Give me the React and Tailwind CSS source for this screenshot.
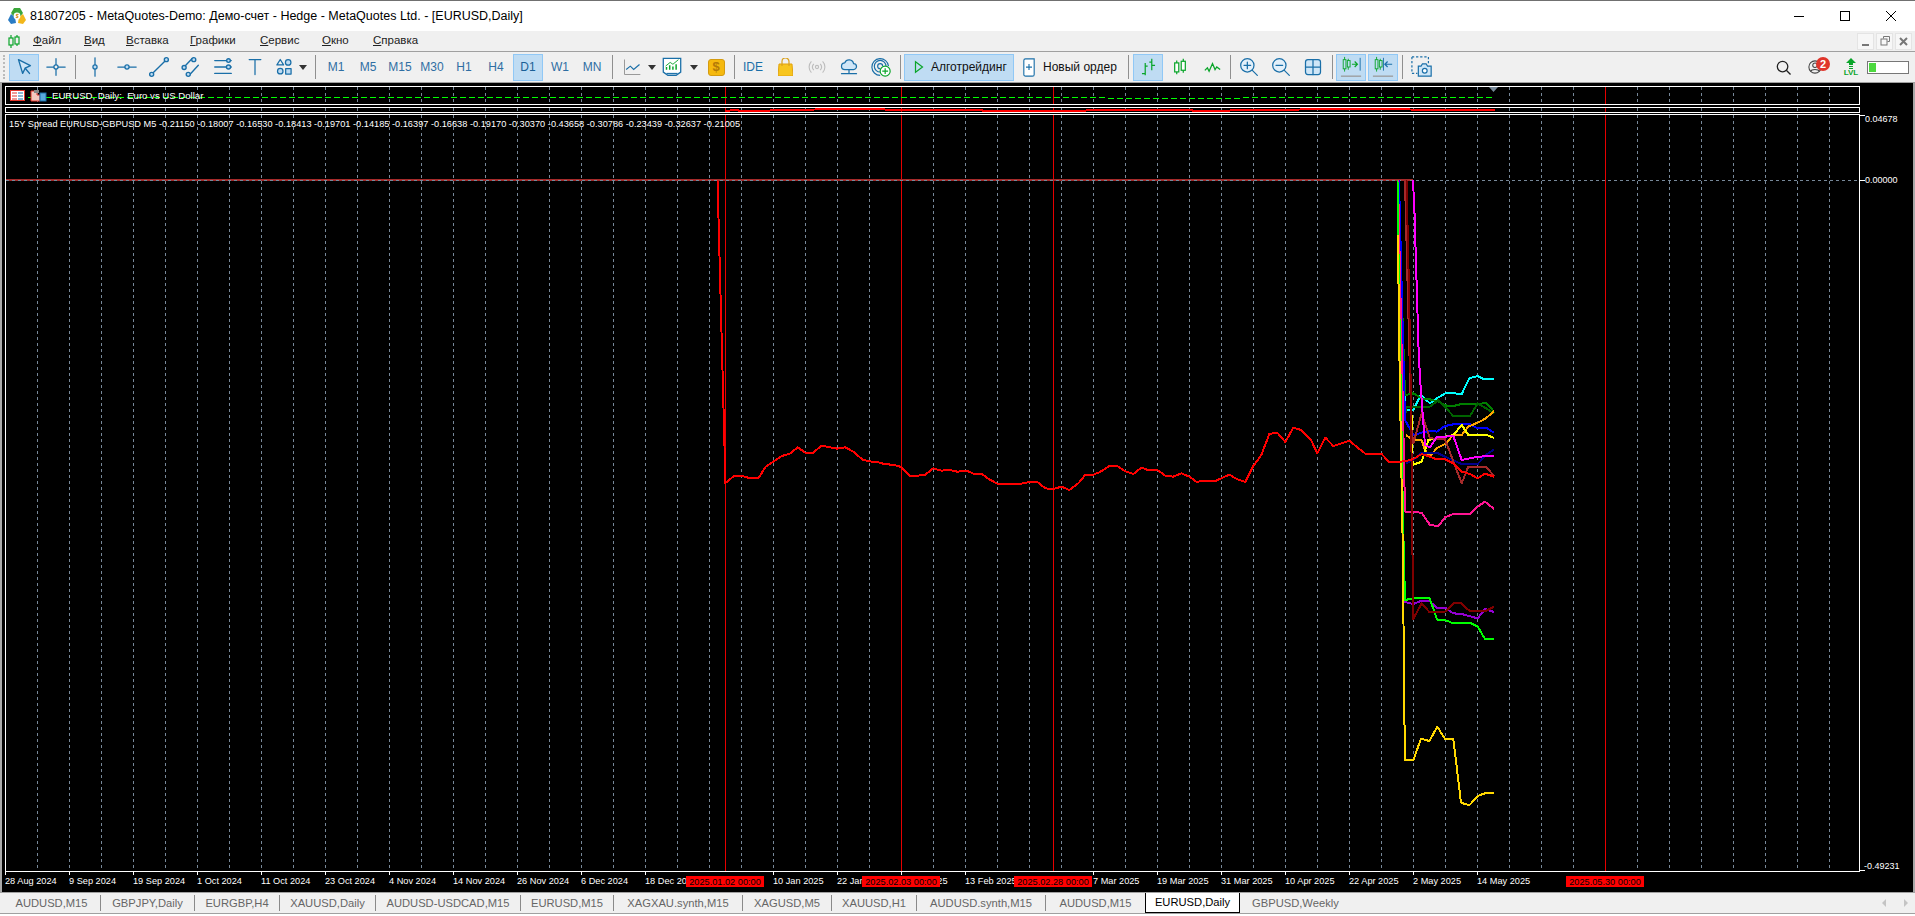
import React from 'react';

const GRID = Array.from({ length: 58 }, (_, i) => 5.5 + 32 * i);
const MARKS = [725.5, 901.5, 1053.5, 1605.5];

// points are read off zoomed crops, so they are kept as crop coords (3x) + crop origin
const z = (ox, oy, pts) => pts.map(([x, y]) => [ox + x / 3, oy + y / 3]);
const line = (...parts) => parts.flat().map(([x, y]) => `${x},${y}`).join(' ');

const RED = line(
  [[717.5, 180], [718.5, 218], [719.5, 256], [720.5, 294], [721.5, 332], [722.5, 370], [723.5, 408], [724.5, 446]],
  z(700, 160, [[75, 970], [103, 947], [125, 947], [150, 955], [175, 955], [197, 920], [245, 888], [268, 882], [293, 862], [316, 878], [340, 878], [364, 857], [412, 866], [436, 862], [460, 875], [488, 899], [508, 904], [532, 906], [556, 913], [580, 914], [604, 921], [628, 947], [652, 947], [676, 944], [700, 925], [724, 932], [748, 930], [772, 935], [800, 932], [820, 941], [844, 941], [868, 958], [892, 971], [964, 971], [988, 966], [1012, 966], [1036, 985], [1060, 987], [1084, 980], [1108, 990], [1135, 970], [1156, 944], [1180, 944], [1200, 936]]),
  z(1100, 400, [[0, 216], [28, 198], [52, 198], [76, 214], [100, 222], [124, 203], [144, 210], [172, 210], [196, 227], [220, 230], [244, 220], [268, 230], [290, 246], [312, 242], [348, 242], [388, 224], [412, 238], [436, 246], [460, 198], [484, 165], [508, 102], [532, 98], [556, 126], [580, 83], [604, 90], [632, 118], [652, 160], [676, 113], [700, 138], [748, 122], [772, 142], [796, 161], [844, 161], [868, 187], [892, 187], [918, 182]]),
  z(1380, 360, [[80, 303], [100, 297], [125, 282], [150, 290], [170, 298], [195, 298], [220, 310], [245, 335], [270, 342], [293, 355], [315, 341], [342, 350]]),
);

const c8 = (pts) => z(1380, 360, pts);
const c9 = (pts) => z(1380, 560, pts);

const SERIES = [
  { color: '#00ffff', pts: line([[1398, 180], [1405, 405]], c8([[80, 150], [100, 150], [122, 105], [150, 130], [175, 112], [200, 98], [245, 102], [268, 55], [293, 48], [310, 57], [342, 57]])) },
  { color: '#008000', pts: line([[1398, 180], [1405, 395]], c8([[78, 105], [100, 100], [125, 115], [150, 118], [175, 125], [200, 137], [225, 137], [245, 132], [270, 132], [320, 130], [342, 155]])) },
  { color: '#006400', pts: line(c8([[78, 160], [78, 140], [100, 140], [150, 140], [175, 120], [220, 168], [270, 168], [293, 130], [318, 145], [342, 160]])) },
  { color: '#0000ff', pts: line([[1399, 180], [1405, 420]], c8([[100, 225], [125, 218], [150, 212], [170, 215], [195, 198], [220, 193], [270, 193], [293, 205], [318, 203], [342, 218]])) },
  { color: '#ffa500', pts: line(c8([[78, 225], [100, 240], [125, 240], [135, 270], [150, 290], [170, 265], [195, 252], [220, 225], [245, 225], [265, 200], [293, 188], [318, 175], [342, 153]])) },
  { color: '#ffff00', pts: line(c8([[92, 55], [98, 315], [125, 305], [145, 240], [220, 225], [245, 195], [265, 225], [320, 225], [342, 234]])) },
  { color: '#00008b', pts: line(c8([[78, 310], [100, 300], [125, 278], [170, 278], [195, 290], [245, 312], [293, 312], [318, 285], [342, 268]])) },
  { color: '#ff1493', pts: line([[1398, 180], [1404, 460]], c8([[75, 455], [125, 458], [150, 495], [175, 498], [195, 472], [220, 462], [270, 462], [293, 440], [315, 425], [342, 447]])) },
  { color: '#9400d3', pts: line(c9([[72, 125], [100, 132], [125, 122], [147, 122], [170, 143], [195, 143], [220, 160], [245, 162], [293, 175], [315, 147], [342, 156]])) },
  { color: '#00ff00', pts: line([[1397.5, 180], [1399, 290], [1401, 400], [1403, 520], [1405, 600]], c9([[100, 115], [148, 113], [172, 180], [195, 180], [215, 188], [270, 188], [293, 200], [315, 237], [342, 237]])) },
  { color: '#ffd700', pts: line([[1398, 235], [1399, 330], [1401, 450], [1403, 560], [1404, 688], [1405, 760]], c9([[100, 600], [123, 536], [148, 543], [172, 500], [195, 537], [220, 537], [243, 728], [268, 736], [293, 708], [320, 698], [342, 698]])) },
  { color: '#a52a2a', pts: line([[1405, 180], [1408, 300], [1411.500, 430]], c8([[100, 250], [125, 160], [150, 235], [195, 238], [245, 370], [265, 320], [318, 320], [342, 348]])) },
  { color: '#800000', pts: line([[1406.500, 180], [1409, 290], [1411, 400], [1412.500, 555]], c9([[99, 178], [125, 130], [147, 155], [195, 155], [220, 130], [243, 130], [268, 152], [318, 152], [342, 140]])) },
  { color: '#ff00ff', pts: line([[1413, 180], [1414.5, 213], [1415.5, 247], [1416.5, 280], [1417.5, 313], [1418.5, 347], [1420, 378]], c8([[135, 255], [150, 262], [170, 232], [220, 228], [245, 300], [293, 290], [342, 288]])) },
];

const DATES = [
  [5, '28 Aug 2024'], [69, '9 Sep 2024'], [133, '19 Sep 2024'], [197, '1 Oct 2024'], [261, '11 Oct 2024'],
  [325, '23 Oct 2024'], [389, '4 Nov 2024'], [453, '14 Nov 2024'], [517, '26 Nov 2024'], [581, '6 Dec 2024'],
  [645, '18 Dec 2024'], [773, '10 Jan 2025'], [837, '22 Jan 2025'], [901, '3 Feb 2025'],
  [965, '13 Feb 2025'], [1093, '7 Mar 2025'], [1157, '19 Mar 2025'], [1221, '31 Mar 2025'],
  [1285, '10 Apr 2025'], [1349, '22 Apr 2025'], [1413, '2 May 2025'], [1477, '14 May 2025'],
];

const TAGS = [
  [686, '2025.01.02 00:00'], [862, '2025.02.03 00:00'], [1014, '2025.02.28 00:00'], [1566, '2025.05.30 00:00'],
];

const TABS = [
  ['AUDUSD,M15', 'w-[98px]', true], ['GBPJPY,Daily', 'w-[94px]', true], ['EURGBP,H4', 'w-[85px]', true],
  ['XAUUSD,Daily', 'w-[96px]', true], ['AUDUSD-USDCAD,M15', 'w-[145px]', true], ['EURUSD,M15', 'w-[93px]', true],
  ['XAGXAU.synth,M15', 'w-[129px]', true], ['XAGUSD,M5', 'w-[89px]', true], ['XAUUSD,H1', 'w-[85px]', true],
  ['AUDUSD.synth,M15', 'w-[129px]', true], ['AUDUSD,M15', 'w-[99px]', false],
];

const MENU = [
  ['Файл', 'w-[51px]'], ['Вид', 'w-[42px]'], ['Вставка', 'w-[64px]'], ['Графики', 'w-[70px]'],
  ['Сервис', 'w-[62px]'], ['Окно', 'w-[51px]'], ['Справка', 'w-[60px]'],
];
const BLUE = '#1a6fa8';
const GREEN = '#0aa52a';

function I({ children, size = 20 }) {
  return (
    <svg width={size} height={size} viewBox="0 0 24 24" fill="none" stroke={BLUE} strokeWidth="1.5" strokeLinecap="round" strokeLinejoin="round">
      {children}
    </svg>
  );
}

function Slot({ active, children, wide }) {
  return (
    <div className={`flex h-[27px] shrink-0 items-center justify-center ${wide || 'w-8'}`}>
      <div className={`flex h-[27px] w-[30px] items-center justify-center border ${active ? 'border-[#90c8f6] bg-[#bfdcf3]' : 'border-transparent'}`}>
        {children}
      </div>
    </div>
  );
}

function Sep({ w }) {
  return (
    <div className={`flex h-[27px] shrink-0 items-center justify-center ${w}`}>
      <div className="h-[24px] w-px bg-[#8f8f8f]" />
    </div>
  );
}

function Caret() {
  return <div className="h-0 w-0 border-x-[4px] border-t-[5px] border-x-transparent border-t-[#333]" />;
}

function Tf({ label, active }) {
  return (
    <Slot active={active}>
      <span className={`text-[12px] ${active ? 'text-[#1a5f96]' : 'text-[#2f6ea3]'}`}>{label}</span>
    </Slot>
  );
}

function Logo() {
  return (
    <svg width="18" height="18" viewBox="0 0 18 18">
      <path d="M6 1h6l3 5-3 4H6L3 6z" fill="#3aa63a" />
      <path d="M3 7l4 3 1 6-5 1-3-4z" fill="#2a7cc4" />
      <path d="M15 7l-4 3-1 6 5 1 3-4z" fill="#f2b71c" />
      <circle cx="9" cy="9" r="3.4" fill="#fff" />
      <path d="M10.5 7.4H8.3v1.6h1.5v1.6H7.7" stroke="#d88a14" strokeWidth="1" fill="none" />
    </svg>
  );
}

function TitleBar() {
  return (
    <div className="flex h-[30px] shrink-0 items-center bg-white pl-[8px] pr-px">
      <Logo />
      <span className="ml-[4px] text-[12.5px] text-black">81807205 - MetaQuotes-Demo: Демо-счет - Hedge - MetaQuotes Ltd. - [EURUSD,Daily]</span>
      <div className="ml-auto flex items-center">
        <div className="flex h-[30px] w-[46px] items-center justify-center">
          <div className="h-px w-[10px] bg-black" />
        </div>
        <div className="flex h-[30px] w-[46px] items-center justify-center">
          <div className="size-[10px] border border-black" />
        </div>
        <div className="flex h-[30px] w-[46px] items-center justify-center">
          <svg width="10" height="10" viewBox="0 0 10 10" stroke="#000" strokeWidth="1"><path d="M0 0l10 10M10 0L0 10" /></svg>
        </div>
      </div>
    </div>
  );
}

function MenuBar() {
  return (
    <div className="flex h-[20px] shrink-0 items-center bg-[#f0f0f0] pl-[8px] pr-[3px]">
      <svg width="12" height="13" viewBox="0 0 12 13" fill="none" stroke="#0aa52a" strokeWidth="1.2">
        <path d="M3 0v13M9 0v11" />
        <rect x="1" y="3" width="4" height="7" fill="#f0f0f0" />
        <rect x="7" y="2" width="4" height="7" fill="#f0f0f0" />
      </svg>
      <div className="ml-[13px] flex text-[11.5px] text-[#222]">
        {MENU.map(([m, w]) => (
          <span key={m} className={w}><span className="underline">{m[0]}</span>{m.slice(1)}</span>
        ))}
      </div>
      <div className="ml-auto flex gap-[2px]">
        <div className="flex size-[17px] items-end justify-center border border-[#e4e4e4] bg-[#f7f7f7] pb-[3px]">
          <div className="h-[2px] w-[7px] bg-[#777]" />
        </div>
        <div className="flex size-[17px] items-center justify-center border border-[#e4e4e4] bg-[#f7f7f7]">
          <svg width="10" height="10" viewBox="0 0 10 10" fill="none" stroke="#777"><path d="M3.5 2.5v-2h6v5h-2" /><rect x="1" y="3" width="6" height="6" /></svg>
        </div>
        <div className="flex size-[17px] items-center justify-center border border-[#e4e4e4] bg-[#f7f7f7]">
          <svg width="9" height="9" viewBox="0 0 9 9" stroke="#777" strokeWidth="2"><path d="M1 1l7 7M8 1L1 8" /></svg>
        </div>
      </div>
    </div>
  );
}

function Toolbar() {
  return (
    <div className="flex h-[32px] shrink-0 items-center border-y border-[#a0a0a0] bg-[#f0f0f0] text-[12px]">
      <div className="ml-[3px] h-[24px] w-[5px] border-l-2 border-dotted border-[#bbb]" />
      <Slot active>
        <I size={22}><path d="M6 4l4.500 15 2.800-5.700L19 10.500z" fill="#cfe6f7" /><path d="M13.300 13.300L18 19" /></I>
      </Slot>
      <Slot>
        <I><path d="M1 12h22M12 2v20" /><circle cx="12" cy="12" r="2.500" fill="#f0f0f0" /></I>
      </Slot>
      <Sep w="w-[7px]" />
      <Slot>
        <I><path d="M12 1v22" /><circle cx="12" cy="12" r="2.500" fill="#bfdcf3" /></I>
      </Slot>
      <Slot>
        <I><path d="M1 12h22" /><circle cx="12" cy="12" r="2.500" fill="#bfdcf3" /></I>
      </Slot>
      <Slot>
        <I size={22}><path d="M4 20L20 4" /><circle cx="4" cy="20" r="2.200" fill="#bfdcf3" /><circle cx="20" cy="4" r="2.200" fill="#bfdcf3" /></I>
      </Slot>
      <Slot>
        <I size={22}><path d="M4.500 12L13 3M10 21l10-11" /><circle cx="4.500" cy="12.500" r="2.200" fill="#bfdcf3" /><circle cx="15" cy="4" r="2.200" fill="#bfdcf3" /><circle cx="9" cy="20" r="2.200" fill="#bfdcf3" /></I>
      </Slot>
      <Slot>
        <I size={22}><path d="M3 5h18M3 12h18M3 19h18" /><circle cx="18" cy="12" r="2.200" fill="#bfdcf3" /><circle cx="18" cy="5" r="2" fill="#bfdcf3" /></I>
      </Slot>
      <Slot>
        <I><path d="M5 3h14M12 3v18" /></I>
      </Slot>
      <div className="flex h-[27px] w-[25px] shrink-0 items-center justify-center">
        <I><path d="M7.500 3l4 6.500h-8z" /><circle cx="17" cy="6.500" r="3.300" fill="#bfdcf3" /><circle cx="7.500" cy="17" r="3.300" fill="#bfdcf3" /><rect x="14" y="14" width="6.500" height="6.500" fill="#bfdcf3" /></I>
      </div>
      <div className="flex w-[14px] shrink-0 justify-center"><Caret /></div>
      <Sep w="w-[10px]" />
      {['M1', 'M5', 'M15', 'M30', 'H1', 'H4'].map((t) => <Tf key={t} label={t} />)}
      <Tf label="D1" active />
      <Tf label="W1" />
      <Tf label="MN" />
      <Sep w="w-[8px]" />
      <Slot>
        <svg width="20" height="20" viewBox="0 0 24 24" fill="none"><path d="M3 3v18h19" stroke="#999" strokeWidth="1.2" /><path d="M5 15l5-4 4 4 7-6" stroke={BLUE} strokeWidth="1.400" /></svg>
      </Slot>
      <div className="flex w-[8px] shrink-0 justify-center"><Caret /></div>
      <Slot>
        <svg width="22" height="22" viewBox="0 0 24 24" fill="none">
          <path d="M2.500 2.500h19v15l-5 3.500h-9l-5-3.500z" fill="#fff" stroke={BLUE} strokeWidth="1.400" />
          <path d="M6 15v-3M9.500 15v-5M13 15v-3.500M16.500 15v-6" stroke={GREEN} strokeWidth="1.600" />
          <path d="M5 11l5-4 3 2 6-5" stroke={GREEN} strokeWidth="1" />
          <path d="M6 19h12" stroke={BLUE} strokeWidth="1.200" />
        </svg>
      </Slot>
      <div className="flex w-[12px] shrink-0 justify-center"><Caret /></div>
      <Slot>
        <div className="flex size-[17px] items-center justify-center rounded-[3px] border border-[#d49b10] bg-[#f5b90f] text-[13px] font-bold text-[#b47a08]">$</div>
      </Slot>
      <Sep w="w-[5px]" />
      <Slot><span className="text-[12px] text-[#1a6fa8]">IDE</span></Slot>
      <Slot>
        <svg width="15" height="18" viewBox="0 0 15 18" fill="none">
          <path d="M1 6h13l1 12H0z" fill="#f7c51e" stroke="#e2a30f" />
          <path d="M4 8V3.500a3.500 3.500 0 017 0V8" stroke="#d9a01a" strokeWidth="1.200" />
        </svg>
      </Slot>
      <Slot>
        <svg width="18" height="16" viewBox="0 0 22 20" fill="none" stroke="#bdbdbd" strokeWidth="1.400">
          <path d="M4 3a10 10 0 000 14M18 3a10 10 0 010 14M7 6a6 6 0 000 8M15 6a6 6 0 010 8" />
          <circle cx="11" cy="10" r="2" />
        </svg>
      </Slot>
      <Slot>
        <I><path d="M7 15a4 4 0 010-8 5.500 5.500 0 0110.500 1 3.500 3.500 0 010 7z" fill="#cfe6f7" /><path d="M12 15v5M3 20h18" /></I>
      </Slot>
      <Slot>
        <svg width="20" height="20" viewBox="0 0 24 24" fill="none" stroke={BLUE} strokeWidth="1.400">
          <path d="M11 22A10 10 0 1121 11M11 18a7 7 0 117-7M11 14a3 3 0 113-3" />
          <circle cx="17" cy="17" r="6" fill="#fff" stroke={GREEN} />
          <path d="M17 13.500v7M13.500 17h7" stroke={GREEN} />
        </svg>
      </Slot>
      <Sep w="w-[7px]" />
      <div className="flex h-[27px] w-[110px] shrink-0 items-center border border-[#90c8f6] bg-[#bfdcf3] pl-[8px]">
        <svg width="12" height="14" viewBox="0 0 12 16" fill="none" stroke={GREEN} strokeWidth="1.400"><path d="M2 2l8 6-8 6z" /></svg>
        <span className="ml-[6px] text-[#111]">Алготрейдинг</span>
      </div>
      <div className="flex h-[27px] w-[110px] shrink-0 items-center pl-[8px]">
        <svg width="14" height="19" viewBox="0 0 14 22" fill="none" stroke={BLUE} strokeWidth="1.300">
          <path d="M1 3a2 2 0 012-2h10v18a2 2 0 01-2 2H3a2 2 0 01-2-2z" fill="#fff" />
          <path d="M7 7v7M3.500 10.500h7" />
        </svg>
        <span className="ml-[7px] text-[#111]">Новый ордер</span>
      </div>
      <Sep w="w-[8px]" />
      <Slot active>
        <svg width="17" height="18" viewBox="0 0 20 22" fill="none" stroke={GREEN} strokeWidth="1.500"><path d="M6 6v15M2 19h4M6 10h3M14 1v14M14 9h4M11 5h3" /></svg>
      </Slot>
      <Slot>
        <svg width="14" height="18" viewBox="0 0 16 22" fill="none" stroke={GREEN} strokeWidth="1.500"><path d="M4 3v17M12 1v17" /><rect x="1.500" y="6" width="5" height="11" fill="#fff" /><rect x="9.500" y="4" width="5" height="11" fill="#fff" /></svg>
      </Slot>
      <Slot>
        <svg width="17" height="12" viewBox="0 0 20 14" fill="none" stroke={GREEN} strokeWidth="1.500"><path d="M1 11l3-3 2 4 4-9 3 7 2-3 4 3" /></svg>
      </Slot>
      <Sep w="w-[5px]" />
      <Slot>
        <I><circle cx="10" cy="10" r="8" fill="#e3f0fa" /><path d="M16 16l6 6M10 6v8M6 10h8" /></I>
      </Slot>
      <Slot>
        <I><circle cx="10" cy="10" r="8" fill="#e3f0fa" /><path d="M16 16l6 6M6 10h8" /></I>
      </Slot>
      <Slot>
        <I><rect x="3" y="3" width="18" height="18" rx="3" fill="#cfe6f7" /><path d="M12 3v18M3 12h18" /></I>
      </Slot>
      <Sep w="w-[6px]" />
      <Slot active>
        <svg width="22" height="22" viewBox="0 0 24 24" fill="none">
          <path d="M5 1v16M9 3v12" stroke={GREEN} /><rect x="3.500" y="4" width="3" height="10" fill="#bfdcf3" stroke={GREEN} /><rect x="8" y="5" width="3" height="7" fill="#bfdcf3" stroke={GREEN} />
          <path d="M13 9h6M16 6l3 3-3 3" stroke={GREEN} strokeWidth="1.300" /><path d="M22 2v14" stroke={BLUE} />
          <path d="M1 22h22" stroke="#9a9a9a" strokeWidth="1.400" />
        </svg>
      </Slot>
      <Slot active>
        <svg width="22" height="22" viewBox="0 0 24 24" fill="none">
          <path d="M5 1v16M9 3v12" stroke={GREEN} /><rect x="3.500" y="4" width="3" height="10" fill="#bfdcf3" stroke={GREEN} /><rect x="8" y="5" width="3" height="7" fill="#bfdcf3" stroke={GREEN} />
          <path d="M14 9h8M17 6l-3 3 3 3" stroke={BLUE} strokeWidth="1.300" /><path d="M12.500 2v14" stroke={BLUE} />
          <path d="M1 22h22" stroke="#9a9a9a" strokeWidth="1.400" />
        </svg>
      </Slot>
      <Sep w="w-[7px]" />
      <Slot>
        <svg width="22" height="22" viewBox="0 0 24 24" fill="none" stroke={BLUE} strokeWidth="1.300">
          <path d="M1 1h18v7M1 1v18h6" strokeDasharray="2.500 2" />
          <path d="M8 11h3l1.500-2.500h4L18 11h4v11H8z" fill="#cfe6f7" />
          <circle cx="15" cy="16" r="2.600" fill="#fff" />
        </svg>
      </Slot>
      <div className="ml-auto flex items-center pr-[6px]">
        <div className="flex w-8 justify-center">
          <svg width="15" height="15" viewBox="0 0 16 16" fill="none" stroke="#222" strokeWidth="1.400"><circle cx="7" cy="7" r="5.600" /><path d="M11 11l4.500 4.500" /></svg>
        </div>
        <div className="relative flex w-8 justify-center">
          <svg width="14" height="14" viewBox="0 0 16 16" fill="none" stroke="#444" strokeWidth="1.200"><circle cx="8" cy="8" r="7" /><circle cx="8" cy="6" r="2.600" /><path d="M3 13c1-3 9-3 10 0" /></svg>
          <div className="absolute left-[17px] top-[-3px] flex size-[14px] items-center justify-center rounded-full bg-[#e0352b] text-[11px] font-bold text-white">2</div>
        </div>
        <div className="ml-[8px] flex w-[24px] flex-col items-center leading-none">
          <svg width="10" height="11" viewBox="0 0 10 11" fill="#0aa52a"><path d="M5 0l5 5H7v2H3V5H0zM3 8h4v1H3zM3 10h4v1H3z" /></svg>
          <span className="text-[8px] font-bold text-[#0aa52a]">LVL</span>
        </div>
        <div className="ml-[4px] flex h-[13px] w-[42px] border border-[#777] bg-white p-px">
          <div className="w-[7px] bg-[#4cd93e]" />
        </div>
      </div>
    </div>
  );
}

// every pane svg uses full-page coords through its viewBox
function Pane({ y, h, children }) {
  return (
    <svg className="block" width="1853" height={h} viewBox={`6 ${y} 1853 ${h}`}>
      {GRID.map((x) => (
        <path key={x} d={`M${x} ${y}V${y + h}`} stroke="#778899" strokeDasharray="3 3" shapeRendering="crispEdges" />
      ))}
      {MARKS.map((x) => (
        <path key={x} d={`M${x} ${y}V${y + h}`} stroke="#e60000" shapeRendering="crispEdges" />
      ))}
      {children}
    </svg>
  );
}

function PriceAxis() {
  return (
    <svg width="53" height="786" viewBox="1860 86 53 786" className="block">
      <path d="M1860 115.500h5M1860 180.500h5M1860 870.500h5" stroke="#fff" shapeRendering="crispEdges" />
      <g fill="#fff" fontSize="9">
        <text x="1865" y="122">0.04678</text>
        <text x="1865" y="183">0.00000</text>
        <text x="1864" y="869">-0.49231</text>
      </g>
    </svg>
  );
}

function TimeAxis() {
  return (
    <svg width="1908" height="20" viewBox="5 872 1908 20" className="block">
      {DATES.map(([x, t]) => (
        <g key={x}>
          <path d={`M${x + 0.5} 872v3`} stroke="#fff" shapeRendering="crispEdges" />
          <text x={x} y="884" fill="#fff" fontSize="9.200">{t}</text>
        </g>
      ))}
      {TAGS.map(([x, t]) => (
        <g key={x}>
          <rect x={x} y="876" width="78" height="11" fill="#ff0000" />
          <text x={x + 39} y="885" fill="#000" fontSize="9.200" textAnchor="middle">{t}</text>
        </g>
      ))}
    </svg>
  );
}

function Chart() {
  return (
    <div className="flex h-[809px] shrink-0 flex-col border-x-2 border-[#a8a8a8] bg-black pl-[3px] pt-[3px]">
      <div className="flex">
        <div className="flex w-[1855px] flex-col">
          <div className="relative h-[19px] border border-white">
            <Pane y={87} h={17}>
              <polyline
                points="10,97.5 1100,97.5 1112,98.5 1130,99 1150,98.5 1235,98.5 1250,97.5 1495,97.5"
                fill="none" stroke="#00ff00" strokeDasharray="6 3" shapeRendering="crispEdges"
              />
              <path d="M1489 87h9l-4.500 5z" fill="#778899" />
            </Pane>
            <div className="absolute left-[4px] top-[2px] flex items-center">
              <svg width="37" height="13" viewBox="0 0 37 13">
                <rect x="0.500" y="1.500" width="14" height="10" fill="#fff" stroke="#e0352b" />
                <path d="M2 4h5M2 7h5M2 10h5" stroke="#e0352b" /><path d="M8 4h5M8 7h5M8 10h5" stroke="#1a6fa8" />
                <path d="M21 2h6v4h3v6h-9z" fill="#f3c9c0" stroke="#e0352b" />
                <rect x="24" y="1" width="5" height="3" fill="#888" />
                <rect x="30" y="4" width="6" height="8" fill="#5aa9dc" stroke="#1a6fa8" />
              </svg>
              <span className="ml-[5px] text-[9.600px] leading-[13px] text-white">EURUSD, Daily:&nbsp; Euro vs US Dollar</span>
            </div>
          </div>
          <div className="mt-[2px] h-[6px] border border-white">
            <Pane y={108} h={4}>
              <polyline
                points="725,111 735,110 742,111 765,111 775,110 815,109.500 855,109 885,109.500 900,110 980,110 985,111 1085,111 1087,110 1190,110 1195,111 1300,109.500 1360,109 1410,109.500 1450,110 1470,110.500 1495,110"
                fill="none" stroke="#ff0000" strokeWidth="2" shapeRendering="crispEdges"
              />
            </Pane>
          </div>
          <div className="relative mt-px h-[758px] border border-white">
            <Pane y={115} h={756}>
              <path d="M6 180H1413" stroke="#a52a2a" strokeWidth="2" shapeRendering="crispEdges" />
              <path d="M6 180H1859" stroke="#778899" strokeDasharray="3 3" shapeRendering="crispEdges" />
              {SERIES.map((s) => (
                <polyline key={s.color} points={s.pts} fill="none" stroke={s.color} strokeWidth="2" strokeLinejoin="round" shapeRendering="crispEdges" />
              ))}
              <polyline points={RED} fill="none" stroke="#ff0000" strokeWidth="2" strokeLinejoin="round" shapeRendering="crispEdges" />
            </Pane>
            <span className="absolute left-[3px] top-[2px] whitespace-nowrap text-[9.230px] leading-[14px] text-white">
              15Y Spread EURUSD-GBPUSD M5 -0.21150 -0.18007 -0.16530 -0.18413 -0.19701 -0.14185 -0.16397 -0.16638 -0.19170 -0.30370 -0.43658 -0.30786 -0.23439 -0.32637 -0.21005
            </span>
          </div>
        </div>
        <PriceAxis />
      </div>
      <TimeAxis />
    </div>
  );
}

function Tabs() {
  return (
    <div className="flex h-[21px] shrink-0 items-center border-t border-[#a0a0a0] bg-[#f0f0f0] pl-[3px] pr-[7px] text-[11.2px] text-[#666]">
      {TABS.map(([t, w, sep]) => (
        <div key={t + w} className={`flex h-[16px] shrink-0 items-center justify-center ${w} ${sep ? 'border-r border-[#8a8a8a]' : ''}`}>{t}</div>
      ))}
      <div className="flex h-[20px] w-[95px] shrink-0 items-center justify-center border-x border-b border-black bg-white text-black">EURUSD,Daily</div>
      <div className="ml-[12px] shrink-0">GBPUSD,Weekly</div>
      <div className="ml-auto flex items-center gap-[18px]">
        <div className="h-0 w-0 border-y-[4px] border-r-[4px] border-y-transparent border-r-[#c4c4c4]" />
        <div className="h-0 w-0 border-y-[4px] border-l-[4px] border-y-transparent border-l-[#c4c4c4]" />
      </div>
    </div>
  );
}

export default function App() {
  return (
    <div className="flex h-[916px] w-[1915px] flex-col overflow-hidden border-t border-[#707070] bg-white font-['Liberation_Sans',Arial,sans-serif]">
      <TitleBar />
      <MenuBar />
      <Toolbar />
      <Chart />
      <Tabs />
      <div className="flex-1 border-t border-[#a0a0a0] bg-white" />
    </div>
  );
}
